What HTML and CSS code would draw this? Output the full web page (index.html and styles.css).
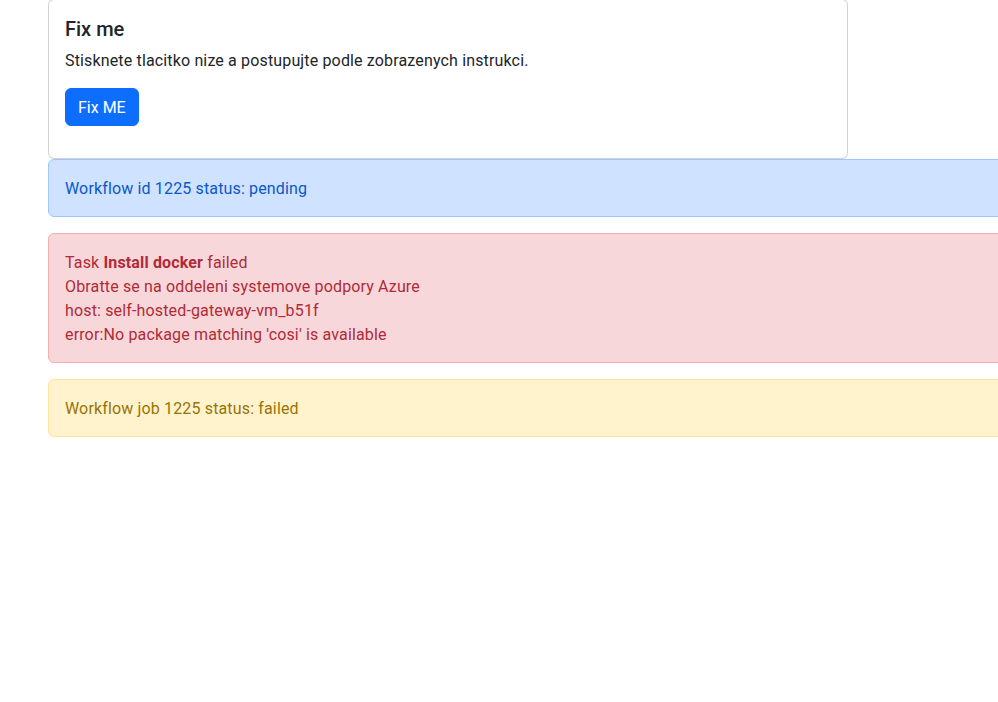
FILE: index.html
```html
<!DOCTYPE html>
<html lang="cs">
<head>
<meta charset="utf-8">
<title>Fix me</title>
<link rel="stylesheet" href="styles.css">
</head>
<body>
<div class="container">
  <div class="card">
    <div class="card-body">
      <h5 class="card-title">Fix me</h5>
      <p class="card-text">Stisknete tlacitko nize a postupujte podle zobrazenych instrukci.</p>
      <form class="fix-form">
        <button type="button" class="btn btn-primary">Fix ME</button>
      </form>
    </div>
  </div>
  <div class="alert alert-primary">Workflow id 1225 status: pending</div>
  <div class="alert alert-danger">Task <b>Install docker</b> failed<br>Obratte se na oddeleni systemove podpory Azure<br>host: self-hosted-gateway-vm_b51f<br>error:No package matching 'cosi' is available</div>
  <div class="alert alert-warning">Workflow job 1225 status: failed</div>
</div>
</body>
</html>
```
FILE: styles.css
```css
* { box-sizing: border-box; }
html, body { margin: 0; padding: 0; }
body {
  font-family: "Roboto", "Liberation Sans", sans-serif;
  font-size: 16px;
  line-height: 1.5;
  letter-spacing: 0.15px;
  color: #212529;
  background: #fff;
  overflow: hidden;
}
.container {
  margin-top: -1px;
  padding-left: 48px;
  width: 1100px;
}
.card {
  width: 800px;
  border: 1px solid rgba(0,0,0,.175);
  border-radius: 6px;
  background: #fff;
}
.card-body { padding: 17px 16px 16px; }
.card-title {
  margin: 0 0 8px;
  font-size: 20px;
  font-weight: 500;
  line-height: 1.2;
  letter-spacing: 0;
}
.card-text { margin: 0 0 15px; }
.fix-form { margin: 0 0 16px; }
.btn {
  display: inline-block;
  font: inherit;
  letter-spacing: 0;
  padding: 7px 12px 5px;
  line-height: 24px;
  border: 1px solid transparent;
  border-radius: 6px;
  cursor: pointer;
}
.btn-primary { background: #0d6efd; border-color: #0d6efd; color: #fff; }
.alert {
  padding: 17px 16px 15px;
  margin-bottom: 16px;
  border: 1px solid transparent;
  border-radius: 6px;
}
.alert-primary { color: #0a58ca; background: #cfe2ff; border-color: #9ec5fe; }
.alert-danger { color: #b02a37; background: #f8d7da; border-color: #f1aeb5; }
.alert-warning { color: #997404; background: #fff3cd; border-color: #ffe69c; }
b { font-weight: 700; }
```
